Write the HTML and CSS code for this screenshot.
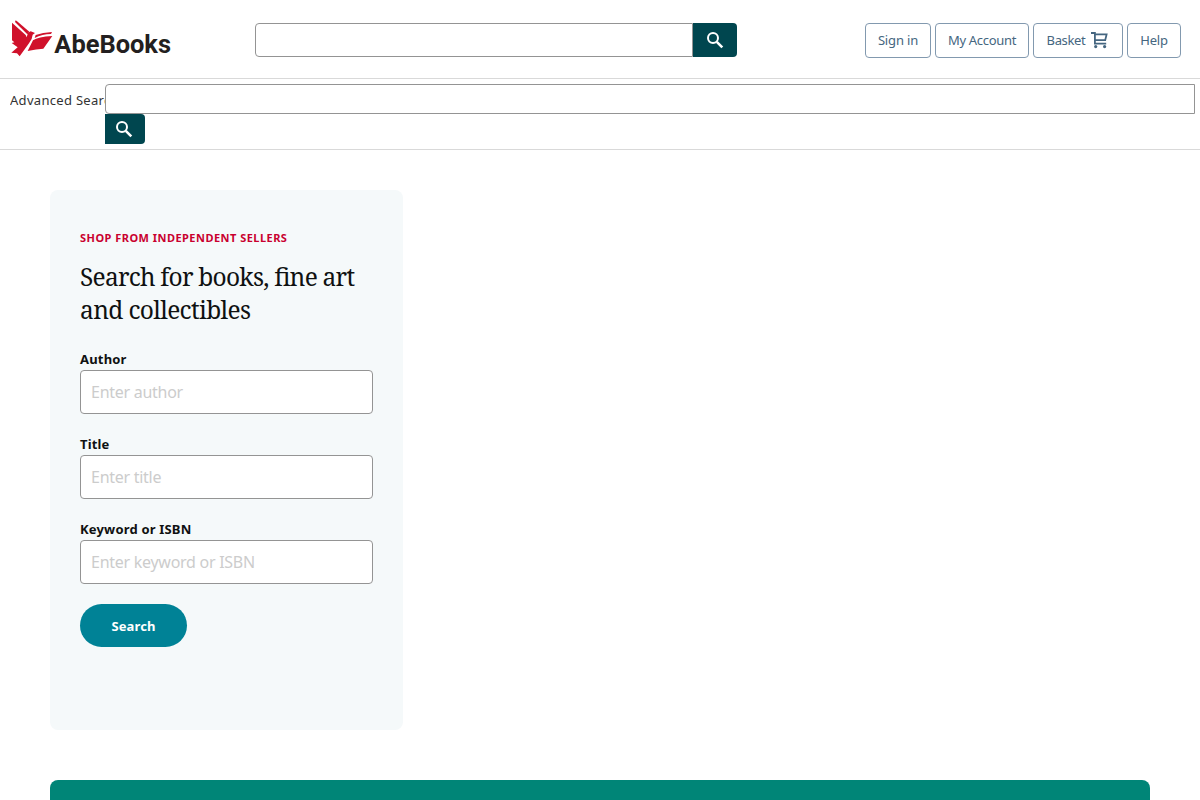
FILE: index.html
```html
<!DOCTYPE html>
<html lang="en">
<head>
<meta charset="utf-8">
<title>AbeBooks</title>
<link rel="stylesheet" href="styles.css">
</head>
<body>
<header class="header">
  <a class="logo" aria-label="AbeBooks">
    <svg width="190" height="60" viewBox="0 0 570 180">
      <g fill="#d0112b">
        <path d="M36 38 L77 75 L80 82 L84 68 L92 64 L105 69 L98 74 Q97 88 87 100 L59 139 L51 130 L34 128 L53 112 L35 99 L43 97 L36 91 Z"/>
        <path d="M47 31 L53 35 L88 65 L82 73 L45 36 Z"/>
        <path d="M99 91 Q114 80 157 78 L130 116 Q110 117 83 123 Z"/>
        <path d="M107 75 Q128 67 156 66 L153 72 Q127 72 104 84 Z"/>
      </g>
      <text class="logo-text" x="163" y="129" textLength="350" lengthAdjust="spacingAndGlyphs">AbeBooks</text>
    </svg>
  </a>
  <form class="search">
    <input class="search-input" type="text" aria-label="Search">
    <button class="search-button" type="button" aria-label="Search"><svg width="18" height="18" viewBox="0 0 18 18"><circle cx="7" cy="7" r="5" fill="none" stroke="#fff" stroke-width="2"/><path d="M10.8 10.8 L16.3 16.3" stroke="#fff" stroke-width="2.6"/></svg></button>
  </form>
  <nav class="links">
    <a class="link signin">Sign in</a>
    <a class="link account">My Account</a>
    <a class="link basket"><span>Basket</span><svg width="18" height="18" viewBox="0 0 18 18" fill="none" stroke="#456680" stroke-width="1.8"><path d="M0 2 H3.9 V12.6 H15.2 M3.9 3.4 H15.6 L14.2 9.2 H4.5"/><g fill="#456680" stroke="none"><circle cx="4.7" cy="15.6" r="1.6"/><circle cx="13.6" cy="15.6" r="1.6"/></g></svg></a>
    <a class="link help">Help</a>
  </nav>
</header>
<div class="subnav">
  <a class="advanced">Advanced Search</a>
  <form class="subsearch">
    <input class="subsearch-input" type="text" aria-label="Search">
    <button class="subsearch-button" type="button" aria-label="Search"><svg width="18" height="18" viewBox="0 0 18 18"><circle cx="7" cy="7" r="5" fill="none" stroke="#fff" stroke-width="2"/><path d="M10.8 10.8 L16.3 16.3" stroke="#fff" stroke-width="2.6"/></svg></button>
  </form>
</div>
<main class="main">
  <section class="card">
    <p class="eyebrow">SHOP FROM INDEPENDENT SELLERS</p>
    <h1 class="title"><svg width="293" height="66"><text x="0" y="25" textLength="275" lengthAdjust="spacing">Search for books, fine art</text><text x="0" y="58" textLength="171" lengthAdjust="spacing">and collectibles</text></svg></h1>
    <label class="field"><span>Author</span><input type="text" placeholder="Enter author"></label>
    <label class="field"><span>Title</span><input type="text" placeholder="Enter title"></label>
    <label class="field"><span>Keyword or ISBN</span><input type="text" placeholder="Enter keyword or ISBN"></label>
    <button class="submit" type="button">Search</button>
  </section>
  <section class="banner"></section>
</main>
</body>
</html>
```
FILE: styles.css
```css
* { box-sizing: border-box; }
body { margin: 0; height: 800px; background: #fff; color: #0f1111; font-family: "Noto Sans", sans-serif; font-size: 13px; }
input, button { font-family: inherit; margin: 0; outline: none; }
.header { display: flex; align-items: flex-start; height: 79px; border-bottom: 1px solid #d9d9d9; }
.logo { width: 255px; padding-top: 10px; }
.logo svg, .title svg { display: block; overflow: visible; }
.logo-text { font-family: Roboto, sans-serif; font-weight: 700; font-size: 79px; fill: #231f20; }
.search { display: flex; width: 482px; height: 34px; margin-top: 23px; }
.search-input { flex: 1; min-width: 0; border: 1px solid #949494; border-radius: 4px 0 0 4px; padding: 0 10px; }
.search-button { display: flex; align-items: center; justify-content: center; width: 44px; padding: 0; border: 0; border-radius: 0 4px 4px 0; background: #00464f; }
.links { display: flex; gap: 4px; margin: 23px 19px 0 auto; }
.link { display: flex; align-items: center; justify-content: center; gap: 6px; height: 35px; padding-bottom: 2px; border: 1px solid #8299af; border-radius: 4px; color: #456680; font-size: 13px; white-space: nowrap; }
.signin { width: 66px; letter-spacing: -.15px; }
.account { width: 94px; letter-spacing: -.3px; }
.basket { width: 90px; letter-spacing: -.35px; }
.help { width: 54px; letter-spacing: -.2px; }
.subnav { display: flex; height: 71px; padding: 5px 5px 0 10px; border-bottom: 1px solid #d9d9d9; }
.advanced { width: 95px; overflow: hidden; white-space: nowrap; line-height: 33px; letter-spacing: .3px; color: #333; }
.subsearch { flex: 1; }
.subsearch-input { display: block; width: 100%; height: 30px; border: 1px solid #949494; border-radius: 4px 0 0 4px; padding: 0 10px; }
.subsearch-button { display: flex; align-items: center; justify-content: center; width: 40px; height: 30px; padding: 0 2px 0 0; border: 0; border-radius: 0 4px 4px 0; background: #00464f; }
.main { padding: 40px 50px 0; }
.card { width: 353px; height: 540px; padding: 40px 30px 0; border-radius: 8px; background: #f5f9fa; }
.eyebrow { margin: 0 0 20px; font-size: 11px; line-height: 16px; letter-spacing: .47px; font-weight: 700; color: #c9002e; white-space: nowrap; }
.title { margin: -5px 0 23px; font-weight: 400; font-size: 24.5px; font-family: "Noto Serif", "DejaVu Serif", serif; }
.title text { fill: #0f1111; }
.field { display: block; height: 85px; font-weight: 700; line-height: 18px; letter-spacing: .18px; }
.field span { display: block; height: 20px; }
.field input { display: block; width: 293px; height: 44px; border: 1px solid #949494; border-radius: 4px; padding: 0 10px 1px; font-size: 16px; letter-spacing: -.27px; background: #fff; }
.field input::placeholder { color: #ccc; opacity: 1; }
.submit { display: block; width: 107px; height: 43px; margin-top: -1px; border: 0; border-radius: 22px; background: #008296; color: #fff; font-size: 13px; font-weight: 700; letter-spacing: .1px; }
.banner { height: 20px; margin-top: 50px; border-radius: 8px 8px 0 0; background: #008577; }
```
